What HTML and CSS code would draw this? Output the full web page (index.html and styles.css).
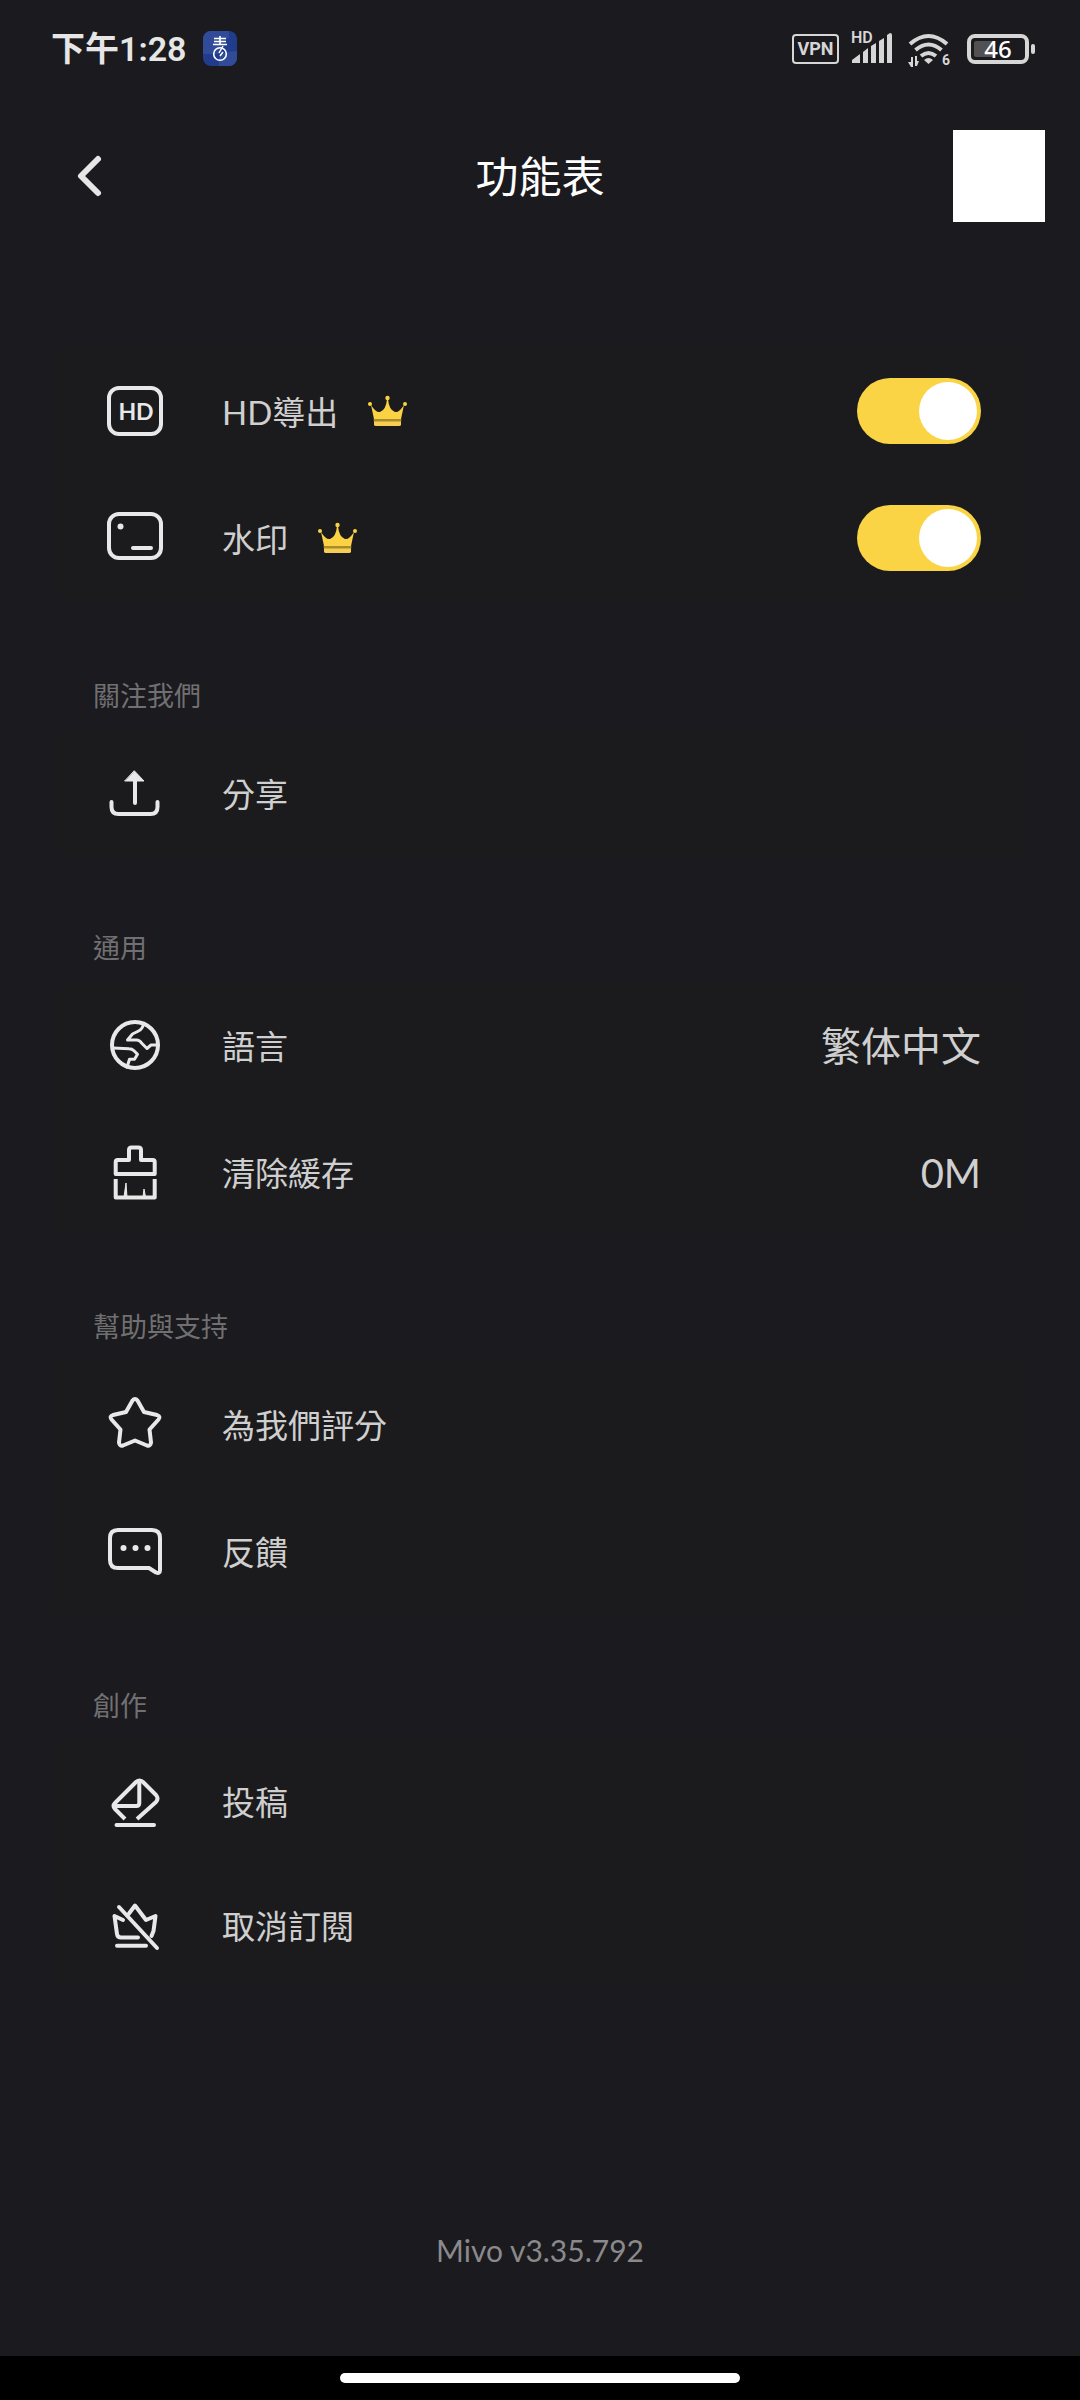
FILE: index.html
```html
<!DOCTYPE html>
<html lang="zh-Hant">
<head>
<meta charset="utf-8">
<meta name="viewport" content="width=device-width, initial-scale=1">
<title>功能表</title>
<link rel="stylesheet" href="styles.css">
</head>
<body>
<div class="status">
  <span class="time">下午1:28</span>
  <svg class="app-badge" width="34" height="36" viewBox="0 0 34 36" aria-hidden="true">
    <rect width="34" height="35" rx="8" fill="#223c8d"/>
    <path d="M0 23V8a8 8 0 0 1 8-8h18v7q-8 3-10 16zM16 35V26q6-6 18-6v7a8 8 0 0 1-8 8z" fill="#314b98"/>
    <path d="M11 7.500h12M11 10.500h12M10 13.500h14M17 5v9" stroke="#fff" stroke-width="1.600" fill="none"/>
    <circle cx="17" cy="23" r="6.300" stroke="#fff" stroke-width="1.600" fill="none"/>
    <path d="M20 15l-4 7M20 21l-3 4" stroke="#fff" stroke-width="1.500" fill="none"/>
  </svg>
  <div class="indicators">
    <span class="vpn">VPN</span>
    <svg class="signal" width="42" height="52" viewBox="0 -8 42 52" aria-hidden="true">
      <text x="0" y="12" class="tiny">HD</text>
      <path d="M1 32v-3l8-6v9zM12 32V21l5-4v15zM20 32V15l5-3v20zM28 32V10l5-3v25zM36 32V4l3-2q2 0 2 2v28z"/>
    </svg>
    <svg class="wifi" width="44" height="52" viewBox="0 -8 44 52" aria-hidden="true">
      <g fill="none" stroke="#d6d6d6" stroke-width="4">
        <path d="M3 13q18.500-16 37 0M8.500 19q13-11 26 0M14 25q7.500-6 15 0"/>
      </g>
      <path d="M17 29q4.500-4 9 0l-4.500 4zM4 26h2v10H4L1 31h3zM8 25h2v5h2l-2 5H8z"/>
      <text x="35" y="34" class="tiny tiny-six">6</text>
    </svg>
    <svg class="battery" width="69" height="52" viewBox="0 -11 69 52" aria-hidden="true">
      <rect x="2" y="2" width="58" height="26" rx="6" fill="none" stroke="#d6d6d6" stroke-width="4"/>
      <rect x="7" y="7" width="21" height="16" rx="2" fill="#515154"/>
      <rect x="64" y="10" width="4" height="10" rx="2"/>
      <text x="31" y="24" text-anchor="middle" class="charge">46</text>
    </svg>
  </div>
</div>

<header class="header">
  <button class="back" aria-label="返回">
    <svg width="30" height="48" viewBox="0 0 30 48"><path d="M24 7L7 24l17 17" fill="none" stroke="#e6e6e6" stroke-width="6" stroke-linecap="round" stroke-linejoin="round"/></svg>
  </button>
  <h1 class="title">功能表</h1>
  <div class="avatar"></div>
</header>

<main class="menu">
  <section class="card card-first">
    <label class="row">
      <svg class="icon" viewBox="0 0 60 60"><rect x="4" y="7" width="52" height="46" rx="10"/><text x="31" y="39" text-anchor="middle" class="hd">HD</text></svg>
      <span class="name">HD導出</span>
      <svg class="crown" viewBox="0 0 40 32"><use href="#crown"/></svg>
      <input class="switch" type="checkbox" role="switch" checked>
    </label>
    <label class="row">
      <svg class="icon" viewBox="0 0 60 60"><rect x="4" y="6" width="52" height="44" rx="10"/><circle cx="15.500" cy="18.500" r="3" class="solid"/><path d="M28 40h18"/></svg>
      <span class="name">水印</span>
      <svg class="crown" viewBox="0 0 40 32">
        <g id="crown">
          <path d="M3 10Q8 18 12 17Q18 15 19 4h1Q21 15 27 17Q31 18 36 10L33 24H6z"/>
          <circle cx="2" cy="9" r="2"/><circle cx="37" cy="9" r="2"/><circle cx="19.500" cy="3" r="2.200"/>
          <path d="M5.500 24h28l-.5 3h-27z" fill="#a88c2c"/>
          <path d="M6 26.500h27v3q0 1.500-2 1.500H8q-2 0-2-1.500z" fill="#f7cd52"/>
        </g>
      </svg>
      <input class="switch" type="checkbox" role="switch" checked>
    </label>
  </section>

  <h2 class="heading">關注我們</h2>
  <section class="card">
    <button class="row">
      <svg class="icon" viewBox="0 0 60 60"><path d="M30 40V18M6.500 39v5q0 7 7 7h32q7 0 7-7v-5"/><path d="M29.500 8L39 18H20z" class="solid fine"/></svg>
      <span class="name">分享</span>
    </button>
  </section>

  <h2 class="heading">通用</h2>
  <section class="card">
    <button class="row">
      <svg class="icon" viewBox="0 0 60 60"><circle cx="30" cy="30" r="23"/><path class="thin" d="M38.500 9q-1 5-5 7l-6 3-5 6h9q3 0 5 3l5.500 5.500 4-3.500h7M8 33l16 .7q3 0 5 2l3.500 3.500-3 5h-5l-2.500 8"/></svg>
      <span class="name">語言</span>
      <span class="value">繁体中文</span>
    </button>
    <button class="row">
      <svg class="icon" viewBox="0 0 60 60"><path d="M10.700 32V20q0-2 2-2H24V8q0-2.500 2.500-2.500h7Q36 5.500 36 8v10h11.700q2 0 2 2v12zM10.700 37v18.500h39V37" class="square"/><path d="M19 55l2-14 1 14zM38 55l1-8 1.500 8z" class="solid fine"/></svg>
      <span class="name">清除緩存</span>
      <span class="value">0M</span>
    </button>
  </section>

  <h2 class="heading">幫助與支持</h2>
  <section class="card">
    <button class="row">
      <svg class="icon" viewBox="0 0 60 60"><path d="M27.500 6.500Q30 3.500 32.500 6.500L39 18L52 21Q56 22.500 53.500 25.500L44.500 35.500L46 48.500Q45.500 52.500 42 51.500L30 46.500L18 51.500Q14.500 52.500 14 48.500L15.500 35.500L6.500 25.500Q4 22.500 8 21L21 18z"/></svg>
      <span class="name">為我們評分</span>
    </button>
    <button class="row">
      <svg class="icon" viewBox="0 0 60 60"><path d="M13 9h34q8 0 8 8v32q0 4-4 2.500L44 47H13q-8 0-8-8V17q0-8 8-8z"/><circle cx="18.500" cy="27" r="3" class="solid"/><circle cx="30.500" cy="27" r="3" class="solid"/><circle cx="42.500" cy="27" r="3" class="solid"/></svg>
      <span class="name">反饋</span>
    </button>
  </section>

  <h2 class="heading">創作</h2>
  <section class="card card-last">
    <button class="row">
      <svg class="icon" viewBox="0 0 60 60"><path d="M20 48L10 38Q7 35 10 32L31 11Q34.500 8 38 11L51 24Q54 27.500 51 31L32 48" class="square"/><path d="M34.300 11v21q0 3-3 3H9M11.500 54H49"/></svg>
      <span class="name">投稿</span>
    </button>
    <button class="row">
      <svg class="icon" viewBox="0 0 60 60"><path d="M14 12l38 41M18 25l-8.500-4 2.500 18q.5 3.500 4 3.500h17M24 18.500l6-8L41 25l9.500-4-2 15-2 5M12 50.700h29"/></svg>
      <span class="name">取消訂閱</span>
    </button>
  </section>
</main>

<footer class="version">Mivo v3.35.792</footer>
<div class="nav"><div class="pill"></div></div>
</body>
</html>
```
FILE: styles.css
```css
* { box-sizing: border-box; }

body {
  margin: 0;
  min-height: 100vh;
  display: flex;
  flex-direction: column;
  background: #1b1a1e;
  color: #cfcfcf;
  font-family: Lato, "Noto Sans CJK TC", sans-serif;
}

button {
  border: 0;
  padding: 0;
  background: none;
  color: inherit;
  font: inherit;
  text-align: left;
}

.status {
  display: flex;
  align-items: center;
  height: 98px;
  padding: 0 44px 0 51px;
}
.time {
  color: #e6e6e6;
  font-family: Roboto, "Noto Sans CJK SC", sans-serif;
  font-size: 34px;
  line-height: 48px;
  font-weight: 600;
}
.app-badge { margin-left: 16px; }
.indicators {
  display: flex;
  align-items: center;
  margin-left: auto;
  fill: #d6d6d6;
}
.vpn {
  width: 47px;
  height: 30px;
  border: 2px solid #d6d6d6;
  border-radius: 4px;
  color: #d6d6d6;
  font: 700 18px/26px Roboto, sans-serif;
  text-align: center;
}
.signal { margin-left: 12px; }
.wifi { margin-left: 14px; }
.battery { margin-left: 16px; }
.tiny { font: 600 16px Roboto, sans-serif; }
.tiny-six { font-size: 14px; font-weight: 700; }
.charge { font: 500 24px "Noto Sans", sans-serif; fill: #fff; }

.header {
  display: grid;
  grid-template-columns: 1fr auto 1fr;
  align-items: center;
  height: 156px;
  padding: 0 35px 0 74px;
}
.back { justify-self: start; display: flex; }
.title {
  margin: 2px 39px 0 0;
  color: #fff;
  font-size: 43px;
  line-height: 60px;
  font-weight: 400;
}
.avatar {
  justify-self: end;
  width: 92px;
  height: 92px;
  background: #fff;
}

.menu { padding: 93px 54px 0; }
.card { background: #1b1b1d; }
.card-first { margin-bottom: 3px; }
.row {
  display: flex;
  align-items: center;
  width: 100%;
  height: 127px;
  padding: 0 45px 0 51px;
}
.card-last .row { height: 124px; }
.icon {
  width: 60px;
  height: 60px;
  fill: none;
  stroke: #e8e8e8;
  stroke-width: 4;
  stroke-linecap: round;
  stroke-linejoin: round;
}
.thin { stroke-width: 3; }
.fine { stroke-width: 1; }
.square { stroke-linecap: butt; }
.solid { fill: #e8e8e8; }
.icon circle.solid { stroke: none; }
.hd {
  fill: #e8e8e8;
  stroke: none;
  font: 700 23px Lato, sans-serif;
}
.name {
  margin-left: 57px;
  padding-top: 2px;
  font-size: 33px;
  line-height: 48px;
}
.crown {
  width: 40px;
  height: 32px;
  margin-left: 30px;
  fill: #fad243;
}
.value {
  margin-left: auto;
  padding-top: 2px;
  font-size: 40px;
  line-height: 56px;
}
.switch {
  appearance: none;
  display: flex;
  align-items: center;
  width: 124px;
  height: 66px;
  margin: 0 0 0 auto;
  padding: 4px;
  border-radius: 33px;
  background: #fad445;
}
.switch::before {
  content: "";
  width: 58px;
  height: 58px;
  border-radius: 50%;
  background: #fff;
}
.switch:checked::before { margin-left: auto; }

.heading {
  margin: 0;
  padding: 72px 0 13px 39px;
  color: #707072;
  font-size: 27px;
  line-height: 40px;
  font-weight: 400;
}

.version {
  margin: auto 0 85px;
  color: #8a8a8c;
  font-size: 30px;
  line-height: 42px;
  text-align: center;
}
.nav {
  display: flex;
  align-items: center;
  justify-content: center;
  height: 44px;
  background: #000;
}
.pill {
  width: 37%;
  height: 10px;
  border-radius: 5px;
  background: #fff;
}
```
